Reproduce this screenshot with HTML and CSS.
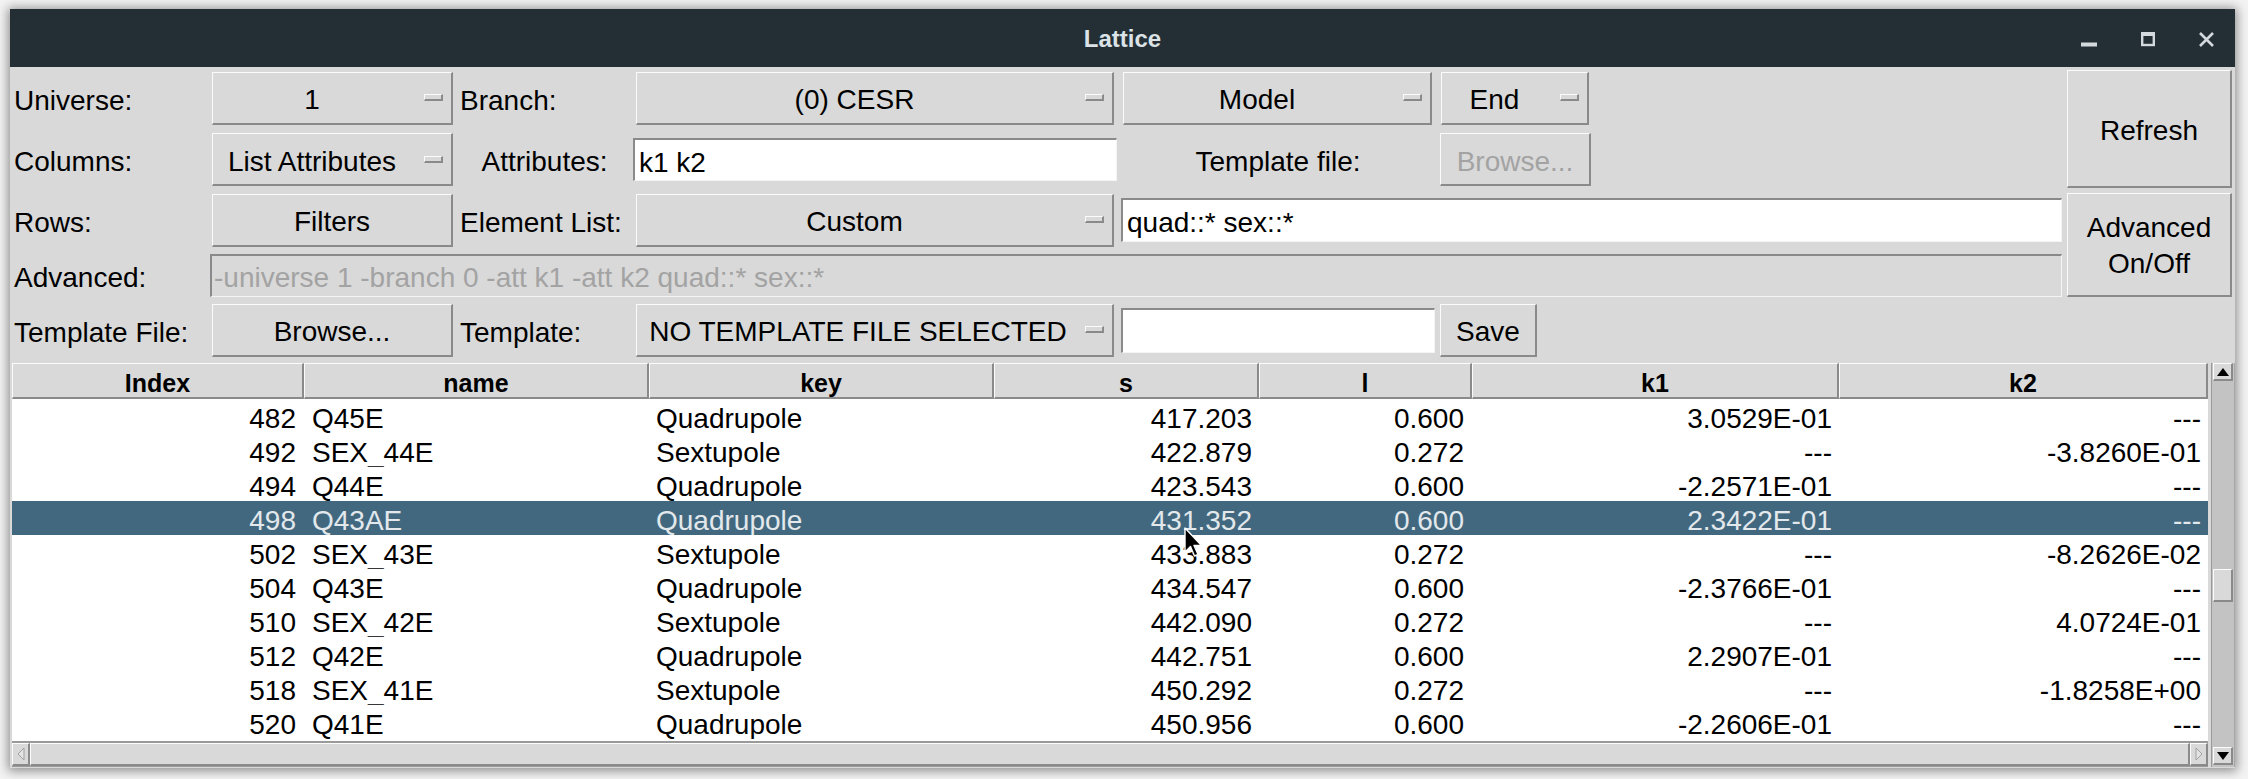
FILE: index.html
```html
<!DOCTYPE html>
<html>
<head>
<meta charset="utf-8">
<title>Lattice</title>
<link rel="stylesheet" href="styles.css">
</head>
<body>
<div class="window">
  <header class="titlebar">
    <div class="tb-spacer"></div>
    <div class="title">Lattice</div>
    <div class="wm">
      <svg class="wm-min" width="16" height="18" viewBox="0 0 16 18"><rect x="0" y="13" width="16" height="3"/></svg>
      <svg class="wm-max" width="14" height="18" viewBox="0 0 14 18"><rect x="1.2" y="4" width="11.6" height="11" fill="none" stroke-width="2.4"/><rect x="0" y="2.5" width="14" height="3"/></svg>
      <svg class="wm-close" width="17" height="18" viewBox="0 0 17 18"><path d="M2 3 L15 16 M15 3 L2 16" fill="none" stroke-width="2.6"/></svg>
    </div>
  </header>

  <main class="content">
    <div class="controls">
      <span class="lbl c0 r0">Universe:</span>
      <div class="mbtn c1 r0"><span class="mb-text">1</span><span class="mb-ind"></span></div>
      <span class="lbl c2 r0">Branch:</span>
      <div class="mbtn c3 r0"><span class="mb-text">(0) CESR</span><span class="mb-ind"></span></div>
      <div class="mbtn c4 r0 model"><span class="mb-text">Model</span><span class="mb-ind"></span></div>
      <div class="mbtn c5 r0 endb"><span class="mb-text">End</span><span class="mb-ind"></span></div>
      <div class="btn refresh">Refresh</div>

      <span class="lbl c0 r1">Columns:</span>
      <div class="mbtn c1 r1"><span class="mb-text">List Attributes</span><span class="mb-ind"></span></div>
      <span class="lbl c2 r1 center">Attributes:</span>
      <div class="entry c3 r1 attr">k1 k2</div>
      <span class="lbl c4 r1 center">Template file:</span>
      <div class="btn c5 r1 disabled browse-tf">Browse...</div>

      <span class="lbl c0 r2">Rows:</span>
      <div class="btn c1 r2">Filters</div>
      <span class="lbl c2 r2">Element List:</span>
      <div class="mbtn c3 r2"><span class="mb-text">Custom</span><span class="mb-ind"></span></div>
      <div class="entry r2 quad">quad::* sex::*</div>
      <div class="btn advbtn">Advanced<br>On/Off</div>

      <span class="lbl c0 r3">Advanced:</span>
      <div class="entry r3 adv disabled">-universe 1 -branch 0 -att k1 -att k2 quad::* sex::*</div>

      <span class="lbl c0 r4">Template File:</span>
      <div class="btn c1 r4">Browse...</div>
      <span class="lbl c2 r4">Template:</span>
      <div class="mbtn c3 r4 notpl"><span class="mb-text">NO TEMPLATE FILE SELECTED</span><span class="mb-ind"></span></div>
      <div class="entry c4 r4 tplname"></div>
      <div class="btn c5 r4 save">Save</div>
    </div>

    <div class="table-area">
      <div class="tree">
        <div class="thead">
          <div class="th">Index</div>
          <div class="th">name</div>
          <div class="th">key</div>
          <div class="th">s</div>
          <div class="th">l</div>
          <div class="th">k1</div>
          <div class="th">k2</div>
        </div>
        <div class="tbody">
          <div class="tr"><span class="td r">482</span><span class="td">Q45E</span><span class="td">Quadrupole</span><span class="td r">417.203</span><span class="td r">0.600</span><span class="td r">3.0529E-01</span><span class="td r">---</span></div>
          <div class="tr"><span class="td r">492</span><span class="td">SEX_44E</span><span class="td">Sextupole</span><span class="td r">422.879</span><span class="td r">0.272</span><span class="td r">---</span><span class="td r">-3.8260E-01</span></div>
          <div class="tr"><span class="td r">494</span><span class="td">Q44E</span><span class="td">Quadrupole</span><span class="td r">423.543</span><span class="td r">0.600</span><span class="td r">-2.2571E-01</span><span class="td r">---</span></div>
          <div class="tr sel"><span class="td r">498</span><span class="td">Q43AE</span><span class="td">Quadrupole</span><span class="td r">431.352</span><span class="td r">0.600</span><span class="td r">2.3422E-01</span><span class="td r">---</span></div>
          <div class="tr"><span class="td r">502</span><span class="td">SEX_43E</span><span class="td">Sextupole</span><span class="td r">433.883</span><span class="td r">0.272</span><span class="td r">---</span><span class="td r">-8.2626E-02</span></div>
          <div class="tr"><span class="td r">504</span><span class="td">Q43E</span><span class="td">Quadrupole</span><span class="td r">434.547</span><span class="td r">0.600</span><span class="td r">-2.3766E-01</span><span class="td r">---</span></div>
          <div class="tr"><span class="td r">510</span><span class="td">SEX_42E</span><span class="td">Sextupole</span><span class="td r">442.090</span><span class="td r">0.272</span><span class="td r">---</span><span class="td r">4.0724E-01</span></div>
          <div class="tr"><span class="td r">512</span><span class="td">Q42E</span><span class="td">Quadrupole</span><span class="td r">442.751</span><span class="td r">0.600</span><span class="td r">2.2907E-01</span><span class="td r">---</span></div>
          <div class="tr"><span class="td r">518</span><span class="td">SEX_41E</span><span class="td">Sextupole</span><span class="td r">450.292</span><span class="td r">0.272</span><span class="td r">---</span><span class="td r">-1.8258E+00</span></div>
          <div class="tr"><span class="td r">520</span><span class="td">Q41E</span><span class="td">Quadrupole</span><span class="td r">450.956</span><span class="td r">0.600</span><span class="td r">-2.2606E-01</span><span class="td r">---</span></div>
        </div>
      </div>

      <div class="vscroll">
        <div class="sb-arrow"><svg width="12" height="8" viewBox="0 0 12 8"><path d="M6 0 L12 8 L0 8 Z"/></svg></div>
        <div class="sb-before"></div>
        <div class="sb-thumb"></div>
        <div class="sb-after"></div>
        <div class="sb-arrow"><svg width="12" height="8" viewBox="0 0 12 8"><path d="M0 0 L12 0 L6 8 Z"/></svg></div>
      </div>

      <div class="hscroll">
        <div class="hs-arrow"><svg width="8" height="14" viewBox="0 0 8 14"><path d="M7 1 L1 7 L7 13 Z"/></svg></div>
        <div class="hs-thumb"></div>
        <div class="hs-arrow"><svg width="8" height="14" viewBox="0 0 8 14"><path d="M1 1 L7 7 L1 13 Z"/></svg></div>
      </div>
    </div>
  </main>
</div>

<svg class="cursor" width="22" height="32" viewBox="0 0 22 32"><path d="M1 1 L1 25 L6.5 19.5 L10.5 29 L14 27.5 L10 18.5 L17.5 18.5 Z" fill="#000" stroke="#fff" stroke-width="1.4" stroke-linejoin="round"/></svg>
</body>
</html>
```

FILE: styles.css
```css
html, body {
  margin: 0;
  padding: 0;
}

body {
  width: 2248px;
  height: 779px;
  overflow: hidden;
  background: #f3f3f3;
  font-family: "Liberation Sans", Arial, sans-serif;
  color: #000;
  position: relative;
}

.window {
  margin: 9px 0 0 10px;
  width: 2225px;
  height: 759px;
  background: #d9d9d9;
  box-shadow: 0 1px 10px 2px rgba(0, 0, 0, 0.42);
  display: flex;
  flex-direction: column;
}

/* ---------- title bar ---------- */
.titlebar {
  height: 58px;
  flex: 0 0 58px;
  background: #232e35;
  display: grid;
  grid-template-columns: 1fr auto 1fr;
  align-items: center;
}

.title {
  color: #dce3e7;
  font-size: 24px;
  font-weight: bold;
  padding-top: 1px;
}

.wm {
  justify-self: end;
  display: flex;
  align-items: center;
  padding-right: 20px;
  padding-top: 1px;
}

.wm svg {
  fill: #d3d9dc;
  stroke: #d3d9dc;
}

.wm-min { margin-right: 44px; }
.wm-max { margin-right: 43px; }
.wm-max rect:first-child { fill: none; }

/* ---------- controls grid ---------- */
.content {
  flex: 1;
  display: flex;
  flex-direction: column;
}

.controls {
  display: grid;
  grid-template-columns: 200px 245px 179px 485px 318px 155px 472px 171px;
  grid-template-rows: 62px 61px 60px 50px 60px;
  font-size: 28px;
}

.c0 { grid-column: 1; }
.c1 { grid-column: 2; }
.c2 { grid-column: 3; }
.c3 { grid-column: 4; }
.c4 { grid-column: 5; }
.c5 { grid-column: 6; }
.r0 { grid-row: 1; }
.r1 { grid-row: 2; }
.r2 { grid-row: 3; }
.r3 { grid-row: 4; }
.r4 { grid-row: 5; }

.lbl {
  align-self: center;
  white-space: nowrap;
  padding-left: 4px;
  padding-top: 5px;
}

.c2.lbl { padding-left: 5px; }

.lbl.center {
  justify-self: center;
  padding-left: 0;
}

.btn, .mbtn {
  box-sizing: border-box;
  height: 53px;
  align-self: center;
  background: #d9d9d9;
  border-style: solid;
  border-width: 1px 2px 2px 1px;
  border-color: #fbfbfb #8a8a8a #8a8a8a #fbfbfb;
  white-space: nowrap;
}

.btn {
  display: flex;
  align-items: center;
  justify-content: center;
  text-align: center;
  margin: 0 2px;
  padding-top: 5px;
}

.mbtn {
  display: flex;
  align-items: center;
  margin: 0 2px;
}

.mb-text {
  flex: 1;
  text-align: center;
  padding-top: 5px;
}

.c3.mbtn { margin: 0 5px 0 2px; }
.model { margin: 0 5px 0 4px; }
.endb { margin: 0 3px 0 4px; }

.mb-ind {
  box-sizing: border-box;
  width: 19px;
  height: 7px;
  margin: 0 8px 0 13px;
  background: #d9d9d9;
  border-style: solid;
  border-width: 1px 2px 2px 1px;
  border-color: #fbfbfb #8a8a8a #8a8a8a #fbfbfb;
}

.notpl .mb-ind { margin-left: 6px; }

.disabled {
  color: #a3a3a3;
}

.browse-tf { margin: 0 1px 0 3px; }

.refresh {
  grid-column: 8;
  grid-row: 1 / span 2;
  height: 118px;
  margin: 0 3px;
}

.advbtn {
  grid-column: 8;
  grid-row: 3 / span 2;
  height: 104px;
  margin: 0 3px;
  line-height: 36px;
  padding-top: 3px;
}

.save {
  justify-self: start;
  width: 97px;
  margin: 0 0 0 3px;
}

.entry {
  box-sizing: border-box;
  align-self: center;
  background: #ffffff;
  border-style: solid;
  border-width: 2px 1px 1px 2px;
  border-color: #8a8a8a #f4f4f4 #f4f4f4 #8a8a8a;
  display: flex;
  align-items: center;
  padding-left: 4px;
  padding-top: 5px;
  white-space: nowrap;
  overflow: hidden;
}

.attr {
  height: 43px;
  margin: 0 2px 0 -1px;
}

.quad {
  grid-column: 5 / span 3;
  height: 44px;
  margin: 0 2px;
}

.adv {
  grid-column: 2 / span 6;
  height: 43px;
  margin: 0 2px 0 0;
  padding-left: 2px;
  background: #d9d9d9;
}

.tplname {
  height: 45px;
  margin: 0 2px;
}

/* ---------- table ---------- */
.table-area {
  display: grid;
  grid-template-columns: 2196px 3px 24px;
  grid-template-rows: 380px 24px;
  padding: 3px 0 0 2px;
}

.tree {
  grid-column: 1;
  grid-row: 1;
  background: #ffffff;
  display: flex;
  flex-direction: column;
  overflow: hidden;
  border-bottom: 2px solid #9a9a9a;
  box-sizing: border-box;
}

.thead {
  display: grid;
  grid-template-columns: 292px 345px 345px 265px 213px 367px 369px;
  height: 36px;
  flex: 0 0 36px;
  background: #d9d9d9;
}

.th {
  box-sizing: border-box;
  border-style: solid;
  border-width: 1px 2px 2px 1px;
  border-color: #fbfbfb #8a8a8a #8a8a8a #fbfbfb;
  font-size: 25px;
  font-weight: bold;
  text-align: center;
  line-height: 36px;
  padding-top: 1px;
  height: 36px;
  overflow: hidden;
}

.tbody {
  display: flex;
  flex-direction: column;
}

.tr {
  box-sizing: border-box;
  display: grid;
  grid-template-columns: 292px 345px 345px 265px 213px 367px 369px;
  height: 34px;
  padding-top: 5px;
  line-height: 29px;
  font-size: 28px;
  white-space: nowrap;
}

.td {
  padding: 0 7px 0 8px;
  overflow: hidden;
}

.td.r {
  text-align: right;
  padding: 0 7px 0 0;
}

.tr .td:first-child { padding-right: 8px; }
.tr .td:nth-child(5) { padding-right: 8px; }
.tr .td:nth-child(3) { padding-left: 7px; }

.tr.sel {
  background: #426880;
  color: #e2e8eb;
}

/* vertical scrollbar */
.vscroll {
  grid-column: 3;
  grid-row: 1 / span 2;
  background: #c3c3c3;
  border-left: 1px solid #9a9a9a;
  border-right: 1px solid #a8a8a8;
  display: flex;
  flex-direction: column;
  padding: 0 1px;
}

.sb-arrow {
  box-sizing: border-box;
  height: 18px;
  flex: 0 0 18px;
  background: #d9d9d9;
  border-style: solid;
  border-width: 1px 2px 2px 1px;
  border-color: #fbfbfb #8a8a8a #8a8a8a #fbfbfb;
  display: flex;
  align-items: center;
  justify-content: center;
}

.sb-arrow svg { fill: #000; }

.sb-before { flex: 0 0 188px; }

.sb-thumb {
  box-sizing: border-box;
  flex: 0 0 33px;
  background: #d9d9d9;
  border-style: solid;
  border-width: 1px 2px 2px 1px;
  border-color: #fbfbfb #8a8a8a #8a8a8a #fbfbfb;
}

.sb-after { flex: 1; }

.sb-arrow:last-child { margin-bottom: 2px; }

/* horizontal scrollbar */
.hscroll {
  grid-column: 1;
  grid-row: 2;
  background: #d9d9d9;
  display: flex;
  border-bottom: 1px solid #9a9a9a;
}

.hs-arrow {
  box-sizing: border-box;
  width: 18px;
  flex: 0 0 18px;
  display: flex;
  align-items: center;
  justify-content: center;
  border-style: solid;
  border-width: 1px 2px 2px 1px;
  border-color: #fbfbfb #8a8a8a #8a8a8a #fbfbfb;
}

.hs-arrow svg {
  fill: #e3e3e3;
  stroke: #a0a0a0;
  stroke-width: 1;
}

.hs-thumb {
  flex: 1;
  box-sizing: border-box;
  border-style: solid;
  border-width: 1px 2px 2px 1px;
  border-color: #fbfbfb #8a8a8a #8a8a8a #fbfbfb;
}

/* mouse pointer overlay */
.cursor {
  position: absolute;
  left: 1184px;
  top: 527px;
}
```
